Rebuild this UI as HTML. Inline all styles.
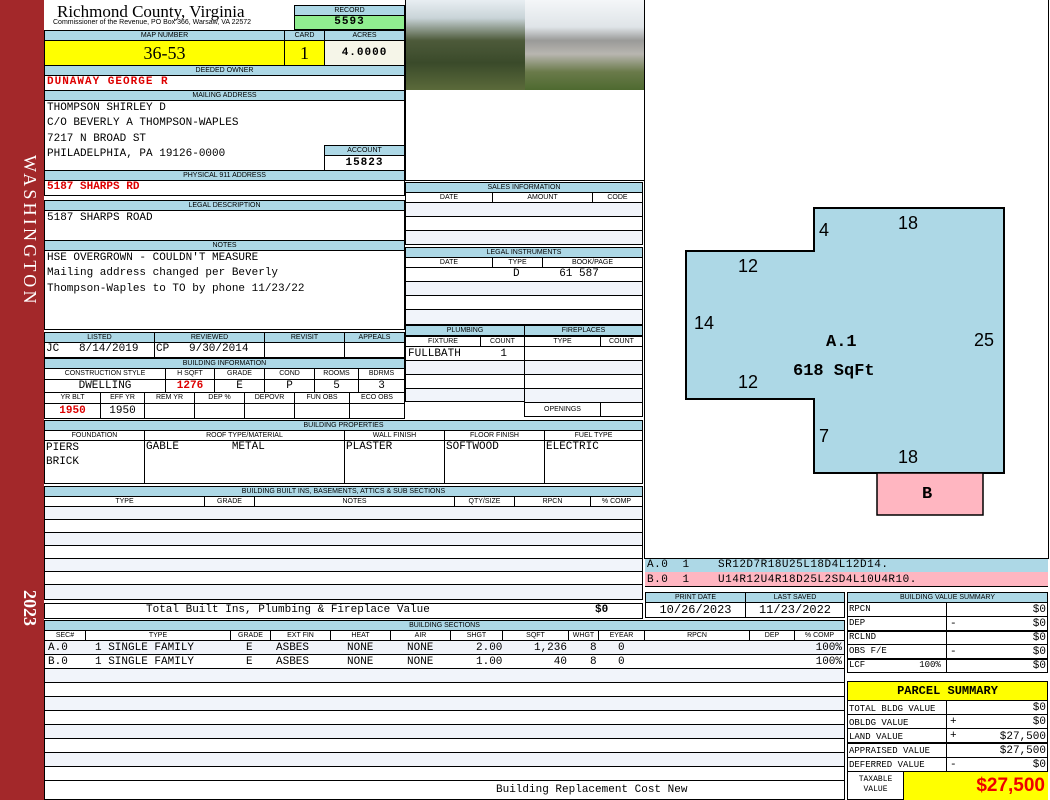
<!DOCTYPE html><html><head><meta charset="utf-8"><style>
*{margin:0;padding:0;box-sizing:border-box}
body{width:1050px;height:800px;position:relative;background:#fff;overflow:hidden;font-family:"Liberation Mono",monospace;font-size:11px;color:#000}
div{position:absolute}
.l{background:#add8e6;border:1px solid #000;font:7px "Liberation Sans",sans-serif;text-align:center;line-height:9px;white-space:nowrap;overflow:hidden}
.c{border:1px solid #000;font:7px "Liberation Sans",sans-serif;text-align:center;line-height:9px;white-space:nowrap;overflow:hidden}
.b{border:1px solid #000}
.t{white-space:pre;font-family:"Liberation Mono",monospace;font-size:11px}
.r{color:#d00;font-weight:bold}
.s1{background:#fff}.s2{background:#f1f4fa}
</style></head><body>
<div style="left:0;top:0;width:44px;height:800px;background:#a3282a"></div>
<div style="left:10px;top:155px;width:30px;height:175px;color:#fff;font:18px 'Liberation Serif',serif;writing-mode:vertical-rl;letter-spacing:3.2px">WASHINGTON</div>
<div style="left:10px;top:590px;width:30px;height:40px;color:#fff;font:bold 18px 'Liberation Serif',serif;writing-mode:vertical-rl">2023</div>

<div style="left:57px;top:2px;font:17px 'Liberation Serif',serif">Richmond County, Virginia</div>
<div style="left:53px;top:19px;font:7px 'Liberation Sans',sans-serif;white-space:nowrap">Commissioner of the Revenue, PO Box 366, Warsaw, VA 22572</div>
<div class="l" style="left:294px;top:5px;width:111px;height:11px">RECORD</div>
<div class="c" style="left:294px;top:15px;width:111px;height:15px;background:#90ee90;font:bold 11px 'Liberation Mono',monospace;line-height:13px;letter-spacing:1px">5593</div>
<div class="l" style="left:44px;top:30px;width:241px;height:11px">MAP NUMBER</div>
<div class="l" style="left:284px;top:30px;width:41px;height:11px">CARD</div>
<div class="l" style="left:324px;top:30px;width:81px;height:11px">ACRES</div>
<div class="c" style="left:44px;top:40px;width:241px;height:26px;background:#ffff00;font:18px 'Liberation Serif',serif;line-height:24px">36-53</div>
<div class="c" style="left:284px;top:40px;width:41px;height:26px;background:#ffff00;font:18px 'Liberation Serif',serif;line-height:24px">1</div>
<div class="c" style="left:324px;top:40px;width:81px;height:26px;background:#f5f5e8;font:bold 11px 'Liberation Mono',monospace;line-height:24px;letter-spacing:1px">4.0000</div>
<div class="l" style="left:44px;top:65px;width:361px;height:11px">DEEDED OWNER</div>
<div class="b" style="left:44px;top:75px;width:361px;height:16px"></div>
<div class="t r" style="left:47px;top:76px;letter-spacing:1px">DUNAWAY GEORGE R</div>
<div class="l" style="left:44px;top:90px;width:361px;height:11px">MAILING ADDRESS</div>
<div class="b" style="left:44px;top:100px;width:361px;height:71px"></div>
<div class="t" style="left:47px;top:101px;line-height:15.3px">THOMPSON SHIRLEY D
C/O BEVERLY A THOMPSON-WAPLES
7217 N BROAD ST
PHILADELPHIA, PA 19126-0000</div>
<div class="l" style="left:324px;top:145px;width:81px;height:11px">ACCOUNT</div>
<div class="c" style="left:324px;top:155px;width:81px;height:16px;font:bold 11px 'Liberation Mono',monospace;line-height:14px;letter-spacing:1px">15823</div>
<div class="l" style="left:44px;top:170px;width:361px;height:11px">PHYSICAL 911 ADDRESS</div>
<div class="b" style="left:44px;top:180px;width:361px;height:16px"></div>
<div class="t r" style="left:47px;top:181px">5187 SHARPS RD</div>
<div class="l" style="left:44px;top:200px;width:361px;height:11px">LEGAL DESCRIPTION</div>
<div class="b" style="left:44px;top:210px;width:361px;height:31px"></div>
<div class="t" style="left:47px;top:212px">5187 SHARPS ROAD</div>
<div class="l" style="left:44px;top:240px;width:361px;height:11px">NOTES</div>
<div class="b" style="left:44px;top:250px;width:361px;height:80px"></div>
<div class="t" style="left:47px;top:251px;line-height:15.3px">HSE OVERGROWN - COULDN'T MEASURE
Mailing address changed per Beverly
Thompson-Waples to TO by phone 11/23/22</div>

<div class="l" style="left:44px;top:332px;width:111px;height:11px">LISTED</div>
<div class="l" style="left:154px;top:332px;width:111px;height:11px">REVIEWED</div>
<div class="l" style="left:264px;top:332px;width:81px;height:11px">REVISIT</div>
<div class="l" style="left:344px;top:332px;width:61px;height:11px">APPEALS</div>
<div class="b" style="left:44px;top:342px;width:111px;height:16px"></div>
<div class="b" style="left:154px;top:342px;width:111px;height:16px"></div>
<div class="b" style="left:264px;top:342px;width:81px;height:16px"></div>
<div class="b" style="left:344px;top:342px;width:61px;height:16px"></div>
<div class="t" style="left:46px;top:343px">JC   8/14/2019</div>
<div class="t" style="left:156px;top:343px">CP   9/30/2014</div>
<div class="l" style="left:44px;top:358px;width:361px;height:11px">BUILDING INFORMATION</div>
<div class="c" style="left:44px;top:368px;width:122px;height:12px">CONSTRUCTION STYLE</div>
<div class="c" style="left:165px;top:368px;width:50px;height:12px">H SQFT</div>
<div class="c" style="left:214px;top:368px;width:51px;height:12px">GRADE</div>
<div class="c" style="left:264px;top:368px;width:51px;height:12px">COND</div>
<div class="c" style="left:314px;top:368px;width:45px;height:12px">ROOMS</div>
<div class="c" style="left:358px;top:368px;width:47px;height:12px">BDRMS</div>
<div class="c t" style="left:44px;top:379px;width:122px;height:14px;font-size:11px;line-height:12px">DWELLING</div>
<div class="c t r" style="left:165px;top:379px;width:50px;height:14px;font-size:11px;line-height:12px">1276</div>
<div class="c t" style="left:214px;top:379px;width:51px;height:14px;font-size:11px;line-height:12px">E</div>
<div class="c t" style="left:264px;top:379px;width:51px;height:14px;font-size:11px;line-height:12px">P</div>
<div class="c t" style="left:314px;top:379px;width:45px;height:14px;font-size:11px;line-height:12px">5</div>
<div class="c t" style="left:358px;top:379px;width:47px;height:14px;font-size:11px;line-height:12px">3</div>
<div class="c" style="left:44px;top:392px;width:57px;height:12px">YR BLT</div>
<div class="c" style="left:100px;top:392px;width:45px;height:12px">EFF YR</div>
<div class="c" style="left:144px;top:392px;width:51px;height:12px">REM YR</div>
<div class="c" style="left:194px;top:392px;width:51px;height:12px">DEP %</div>
<div class="c" style="left:244px;top:392px;width:51px;height:12px">DEPOVR</div>
<div class="c" style="left:294px;top:392px;width:56px;height:12px">FUN OBS</div>
<div class="c" style="left:349px;top:392px;width:56px;height:12px">ECO OBS</div>
<div class="c t r" style="left:44px;top:403px;width:57px;height:16px;font-size:11px;line-height:14px">1950</div>
<div class="c t" style="left:100px;top:403px;width:45px;height:16px;font-size:11px;line-height:14px">1950</div>
<div class="b" style="left:144px;top:403px;width:51px;height:16px"></div>
<div class="b" style="left:194px;top:403px;width:51px;height:16px"></div>
<div class="b" style="left:244px;top:403px;width:51px;height:16px"></div>
<div class="b" style="left:294px;top:403px;width:56px;height:16px"></div>
<div class="b" style="left:349px;top:403px;width:56px;height:16px"></div>

<div style="left:405px;top:0;width:120px;height:90px;background:linear-gradient(180deg,#e8eef2 0%,#c9d4d8 20%,#4d5a3a 45%,#3a4a2a 70%,#5b6a3a 100%)"></div>
<div style="left:525px;top:0;width:120px;height:90px;background:linear-gradient(180deg,#f4f6f8 0%,#dfe4e8 30%,#9a9a98 45%,#b8b6b0 60%,#6a7a4a 80%,#4e6a30 100%)"></div>
<div class="b" style="left:405px;top:0;width:240px;height:181px;border-top:none"></div>
<div class="l" style="left:405px;top:182px;width:238px;height:11px">SALES INFORMATION</div>
<div class="c" style="left:405px;top:192px;width:88px;height:11px">DATE</div>
<div class="c" style="left:492px;top:192px;width:101px;height:11px">AMOUNT</div>
<div class="c" style="left:592px;top:192px;width:51px;height:11px">CODE</div>
<div class="b s2" style="left:405px;top:202px;width:238px;height:15px"></div>
<div class="b s1" style="left:405px;top:216px;width:238px;height:15px"></div>
<div class="b s2" style="left:405px;top:230px;width:238px;height:15px"></div>
<div class="l" style="left:405px;top:247px;width:238px;height:11px">LEGAL INSTRUMENTS</div>
<div class="c" style="left:405px;top:257px;width:88px;height:11px">DATE</div>
<div class="c" style="left:492px;top:257px;width:51px;height:11px">TYPE</div>
<div class="c" style="left:542px;top:257px;width:101px;height:11px">BOOK/PAGE</div>
<div class="b" style="left:405px;top:267px;width:238px;height:15px"></div>
<div class="t" style="left:513px;top:268px">D      61 587</div>
<div class="b s2" style="left:405px;top:281px;width:238px;height:15px"></div>
<div class="b s1" style="left:405px;top:295px;width:238px;height:15px"></div>
<div class="b s2" style="left:405px;top:309px;width:238px;height:16px"></div>
<div class="l" style="left:405px;top:325px;width:120px;height:11px">PLUMBING</div>
<div class="l" style="left:524px;top:325px;width:119px;height:11px">FIREPLACES</div>
<div class="c" style="left:405px;top:336px;width:76px;height:11px">FIXTURE</div>
<div class="c" style="left:480px;top:336px;width:45px;height:11px">COUNT</div>
<div class="c" style="left:524px;top:336px;width:77px;height:11px">TYPE</div>
<div class="c" style="left:600px;top:336px;width:43px;height:11px">COUNT</div>
<div class="b" style="left:405px;top:346px;width:120px;height:15px"></div>
<div class="t" style="left:408px;top:348px">FULLBATH      1</div>
<div class="b s2" style="left:405px;top:360px;width:120px;height:15px"></div>
<div class="b s1" style="left:405px;top:374px;width:120px;height:15px"></div>
<div class="b s2" style="left:405px;top:388px;width:120px;height:14px"></div>
<div class="b s1" style="left:524px;top:346px;width:119px;height:15px"></div>
<div class="b s2" style="left:524px;top:360px;width:119px;height:15px"></div>
<div class="b s1" style="left:524px;top:374px;width:119px;height:15px"></div>
<div class="b s2" style="left:524px;top:388px;width:119px;height:15px"></div>
<div class="c" style="left:524px;top:402px;width:77px;height:15px;line-height:13px">OPENINGS</div>
<div class="b" style="left:600px;top:402px;width:43px;height:15px"></div>

<div class="l" style="left:44px;top:420px;width:599px;height:11px">BUILDING PROPERTIES</div>
<div class="c" style="left:44px;top:430px;width:101px;height:11px">FOUNDATION</div>
<div class="c" style="left:144px;top:430px;width:201px;height:11px">ROOF TYPE/MATERIAL</div>
<div class="c" style="left:344px;top:430px;width:101px;height:11px">WALL FINISH</div>
<div class="c" style="left:444px;top:430px;width:101px;height:11px">FLOOR FINISH</div>
<div class="c" style="left:544px;top:430px;width:99px;height:11px">FUEL TYPE</div>
<div class="b" style="left:44px;top:440px;width:101px;height:44px"></div>
<div class="b" style="left:144px;top:440px;width:201px;height:44px"></div>
<div class="b" style="left:344px;top:440px;width:101px;height:44px"></div>
<div class="b" style="left:444px;top:440px;width:101px;height:44px"></div>
<div class="b" style="left:544px;top:440px;width:99px;height:44px"></div>
<div class="t" style="left:46px;top:441px;line-height:14px">PIERS
BRICK</div>
<div class="t" style="left:146px;top:441px">GABLE        METAL</div>
<div class="t" style="left:346px;top:441px">PLASTER</div>
<div class="t" style="left:446px;top:441px">SOFTWOOD</div>
<div class="t" style="left:546px;top:441px">ELECTRIC</div>

<div class="l" style="left:44px;top:486px;width:599px;height:11px">BUILDING BUILT INS, BASEMENTS, ATTICS &amp; SUB SECTIONS</div>
<div class="c" style="left:44px;top:496px;width:161px;height:11px">TYPE</div>
<div class="c" style="left:204px;top:496px;width:51px;height:11px">GRADE</div>
<div class="c" style="left:254px;top:496px;width:201px;height:11px">NOTES</div>
<div class="c" style="left:454px;top:496px;width:61px;height:11px">QTY/SIZE</div>
<div class="c" style="left:514px;top:496px;width:77px;height:11px">RPCN</div>
<div class="c" style="left:590px;top:496px;width:53px;height:11px">% COMP</div>
<div class="b s2" style="left:44px;top:506px;width:599px;height:14px"></div>
<div class="b s1" style="left:44px;top:519px;width:599px;height:14px"></div>
<div class="b s2" style="left:44px;top:532px;width:599px;height:14px"></div>
<div class="b s1" style="left:44px;top:545px;width:599px;height:14px"></div>
<div class="b s2" style="left:44px;top:558px;width:599px;height:14px"></div>
<div class="b s1" style="left:44px;top:571px;width:599px;height:14px"></div>
<div class="b s2" style="left:44px;top:584px;width:599px;height:16px"></div>
<div class="b" style="left:44px;top:603px;width:599px;height:16px"></div>
<div class="t" style="left:146px;top:604px">Total Built Ins, Plumbing &amp; Fireplace Value</div>
<div class="t" style="left:595px;top:604px;font-weight:bold">$0</div>

<div class="l" style="left:44px;top:620px;width:801px;height:11px">BUILDING SECTIONS</div>
<div class="c" style="left:44px;top:630px;width:42px;height:11px">SEC#</div>
<div class="c" style="left:85px;top:630px;width:146px;height:11px">TYPE</div>
<div class="c" style="left:230px;top:630px;width:41px;height:11px">GRADE</div>
<div class="c" style="left:270px;top:630px;width:61px;height:11px">EXT FIN</div>
<div class="c" style="left:330px;top:630px;width:61px;height:11px">HEAT</div>
<div class="c" style="left:390px;top:630px;width:61px;height:11px">AIR</div>
<div class="c" style="left:450px;top:630px;width:53px;height:11px">SHGT</div>
<div class="c" style="left:502px;top:630px;width:67px;height:11px">SQFT</div>
<div class="c" style="left:568px;top:630px;width:31px;height:11px">WHGT</div>
<div class="c" style="left:598px;top:630px;width:47px;height:11px">EYEAR</div>
<div class="c" style="left:644px;top:630px;width:106px;height:11px">RPCN</div>
<div class="c" style="left:749px;top:630px;width:46px;height:11px">DEP</div>
<div class="c" style="left:794px;top:630px;width:51px;height:11px">% COMP</div>
<div class="b s2" style="left:44px;top:640px;width:801px;height:15px"></div>
<div class="b s1" style="left:44px;top:654px;width:801px;height:15px"></div>
<div class="t" style="left:48px;top:641px;line-height:14px">A.0
B.0</div>
<div class="t" style="left:95px;top:641px;line-height:14px">1 SINGLE FAMILY
1 SINGLE FAMILY</div>
<div class="t" style="left:246px;top:641px;line-height:14px">E
E</div>
<div class="t" style="left:276px;top:641px;line-height:14px">ASBES
ASBES</div>
<div class="t" style="left:347px;top:641px;line-height:14px">NONE
NONE</div>
<div class="t" style="left:407px;top:641px;line-height:14px">NONE
NONE</div>
<div class="t" style="left:476px;top:641px;line-height:14px">2.00
1.00</div>
<div class="t" style="left:505px;top:641px;width:62px;text-align:right;line-height:14px">1,236
40</div>
<div class="t" style="left:590px;top:641px;line-height:14px">8
8</div>
<div class="t" style="left:618px;top:641px;line-height:14px">0
0</div>
<div class="t" style="left:800px;top:641px;width:42px;text-align:right;line-height:14px">100%
100%</div>
<div class="b s2" style="left:44px;top:668px;width:801px;height:15px"></div>
<div class="b s1" style="left:44px;top:682px;width:801px;height:15px"></div>
<div class="b s2" style="left:44px;top:696px;width:801px;height:15px"></div>
<div class="b s1" style="left:44px;top:710px;width:801px;height:15px"></div>
<div class="b s2" style="left:44px;top:724px;width:801px;height:15px"></div>
<div class="b s1" style="left:44px;top:738px;width:801px;height:15px"></div>
<div class="b s2" style="left:44px;top:752px;width:801px;height:15px"></div>
<div class="b s1" style="left:44px;top:766px;width:801px;height:15px"></div>
<div class="b" style="left:44px;top:780px;width:801px;height:20px"></div>
<div class="t" style="left:496px;top:784px">Building Replacement Cost New</div>

<div class="b" style="left:644px;top:0;width:405px;height:559px;border-top:none"></div>
<svg style="position:absolute;left:0;top:0" width="1050" height="560">
<polygon points="686,251 814,251 814,208 1004,208 1004,473 814,473 814,399 686,399" fill="#add8e6" stroke="#000" stroke-width="2"/>
<rect x="877" y="473" width="106" height="42" fill="#ffb6c1" stroke="#000" stroke-width="1.5"/>
<g font-family="Liberation Sans,sans-serif" font-size="18">
<text x="898" y="229">18</text><text x="819" y="236">4</text><text x="738" y="272">12</text>
<text x="694" y="329">14</text><text x="974" y="346">25</text><text x="738" y="388">12</text>
<text x="819" y="442">7</text><text x="898" y="463">18</text></g>
<g font-family="Liberation Mono,monospace" font-size="17" font-weight="bold">
<text x="826" y="346">A.1</text><text x="793" y="375">618 SqFt</text><text x="922" y="498">B</text></g>
</svg>
<div style="left:645px;top:558px;width:403px;height:15px;background:#add8e6;border-top:1px solid #000"></div>
<div style="left:645px;top:572px;width:403px;height:15px;background:#ffb6c1;border-bottom:1px solid #000"></div>
<div class="t" style="left:647px;top:558px;line-height:14.5px;letter-spacing:0.5px">A.0  1    SR12D7R18U25L18D4L12D14.
B.0  1    U14R12U4R18D25L2SD4L10U4R10.</div>

<div class="l" style="left:645px;top:592px;width:101px;height:11px">PRINT DATE</div>
<div class="l" style="left:745px;top:592px;width:100px;height:11px">LAST SAVED</div>
<div class="c t" style="left:645px;top:602px;width:101px;height:16px;font-size:12px;line-height:14px">10/26/2023</div>
<div class="c t" style="left:745px;top:602px;width:100px;height:16px;font-size:12px;line-height:14px">11/23/2022</div>

<div class="l" style="left:847px;top:592px;width:201px;height:11px">BUILDING VALUE SUMMARY</div>
<div style="left:847px;top:602px;width:201px;height:71px;border:1px solid #000"></div>
<div class="t" style="left:849px;top:602px;font-size:9px;line-height:14px">RPCN
DEP
RCLND
OBS F/E
LCF          100%</div>
<div style="left:946px;top:602px;width:1px;height:71px;background:#000"></div>
<div style="left:848px;top:616px;width:200px;height:1px;background:#000"></div>
<div style="left:848px;top:630px;width:200px;height:2px;background:#000"></div>
<div style="left:848px;top:644px;width:200px;height:1px;background:#000"></div>
<div style="left:848px;top:658px;width:200px;height:2px;background:#000"></div>
<div class="t" style="left:950px;top:603px;width:96px;font-size:11px;line-height:14px;text-align:right">$0
$0
$0
$0
$0</div>
<div class="t" style="left:950px;top:617px;line-height:14px">-

-</div>

<div style="left:847px;top:681px;width:201px;height:20px;background:#ffff00;border:1px solid #000;font:bold 12px 'Liberation Mono',monospace;text-align:center;line-height:18px">PARCEL SUMMARY</div>
<div style="left:847px;top:700px;width:201px;height:100px;border:1px solid #000"></div>
<div class="t" style="left:849px;top:702px;font-size:9px;line-height:14px">TOTAL BLDG VALUE
OBLDG VALUE
LAND VALUE
APPRAISED VALUE
DEFERRED VALUE</div>
<div style="left:946px;top:700px;width:1px;height:72px;background:#000"></div>
<div style="left:848px;top:714px;width:200px;height:1px;background:#000"></div>
<div style="left:848px;top:728px;width:200px;height:1px;background:#000"></div>
<div style="left:848px;top:742px;width:200px;height:2px;background:#000"></div>
<div style="left:848px;top:757px;width:200px;height:1px;background:#000"></div>
<div style="left:848px;top:771px;width:200px;height:1px;background:#000"></div>
<div class="t" style="left:950px;top:701px;width:96px;line-height:14.3px;text-align:right">$0
$0
$27,500
$27,500
$0</div>
<div class="t" style="left:950px;top:715px;line-height:14.3px">+
+

-</div>
<div style="left:848px;top:772px;width:55px;height:28px;font:8px 'Liberation Mono',monospace;text-align:center;line-height:10px;padding-top:3px">TAXABLE<br>VALUE</div>
<div style="left:903px;top:772px;width:145px;height:28px;background:#ffff00;border-left:1px solid #000;color:#e00;font:bold 19px 'Liberation Sans',sans-serif;text-align:right;padding-right:3px;line-height:27px">$27,500</div>
</body></html>
